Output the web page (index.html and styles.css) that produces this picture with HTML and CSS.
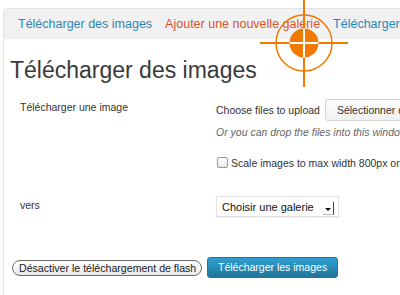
FILE: index.html
```html
<!DOCTYPE html>
<html lang="fr">
<head>
  <meta charset="UTF-8" />
  <title>Télécharger des images</title>
  <link rel="stylesheet" href="styles.css">
</head>
<body>
  <div class="wrap">
    <!-- Tabs -->
    <div class="tabs">
      <a class="tab">Télécharger des images</a>
      <a class="tab current">Ajouter une nouvelle galerie</a>
      <a class="tab">Télécharger un dossier</a>
    </div>

    <h2>Télécharger des images</h2>

    <div class="form-row first">
      <div class="label">Télécharger une image</div>
      <div class="field">
        <div class="line">
          <span>Choose files to upload</span>
          <span class="btn-select">Sélectionner des fichiers</span>
        </div>
        <p class="hint">Or you can drop the files into this window.</p>
        <label class="check">
          <input type="checkbox">
          <span>Scale images to max width 800px or max height 600px</span>
        </label>
      </div>
    </div>

    <div class="form-row">
      <div class="label label-vers">vers</div>
      <div class="field">
        <div class="select">
          <span>Choisir une galerie</span>
          <span class="arrow"></span>
        </div>
      </div>
    </div>

    <div class="actions">
      <span class="btn-flash">Désactiver le téléchargement de flash</span>
      <span class="btn-primary">Télécharger les images</span>
    </div>
  </div>

  <!-- cursor target -->
  <svg class="target" width="90" height="90" viewBox="0 0 90 90">
    <line x1="0" y1="43" x2="88" y2="43" stroke="#f27a00" stroke-width="2"/>
    <line x1="44" y1="0" x2="44" y2="87" stroke="#f27a00" stroke-width="2"/>
    <circle cx="44" cy="43" r="28" fill="none" stroke="#f27a00" stroke-width="1.5"/>
    <circle cx="44" cy="43" r="14.5" fill="#f27a00"/>
    <line x1="29.5" y1="43" x2="58.5" y2="43" stroke="#fff" stroke-width="2"/>
    <line x1="44" y1="28.5" x2="44" y2="57.5" stroke="#fff" stroke-width="2"/>
  </svg>
</body>
</html>
```

FILE: styles.css
```css
body {
  margin: 0;
  font-family: "Liberation Sans", Arial, sans-serif;
  background-color: #fff;
  color: #333;
  overflow: hidden;
  height: 295px;
  position: relative;
}

.wrap {
  margin: 8px 0 0 3px;
  border-left: 1px solid #e3e3e3;
  border-top: 1px solid #e3e3e3;
  border-top-left-radius: 5px;
  height: 300px;
  overflow: hidden;
}

/* Tabs */
.tabs {
  background-color: #f1f1f1;
  height: 30px;
  display: flex;
  align-items: center;
  gap: 13px;
  padding-left: 14px;
  font-size: 12.5px;
  white-space: nowrap;
  border-top-left-radius: 4px;
}

.tab {
  color: #2a86b8;
}

.tab.current {
  color: #d9532c;
}

h2 {
  font-size: 23px;
  font-weight: normal;
  line-height: 26px;
  color: #3a3a3a;
  margin: 18px 0 0 6px;
}

/* Form rows */
.form-row {
  display: flex;
  font-size: 10.5px;
  line-height: 12px;
  white-space: nowrap;
}

.form-row.first {
  margin-top: 16px;
}

.form-row + .form-row {
  margin-top: 27px;
}

.label {
  width: 196px;
  padding: 2px 0 0 16px;
  box-sizing: border-box;
  flex-shrink: 0;
}

.label-vers {
  padding-top: 3px;
}

.field {
  padding-left: 16px;
}

.line {
  display: flex;
  align-items: center;
  gap: 5px;
  height: 22px;
}

.btn-select {
  height: 20px;
  line-height: 20px;
  padding: 0 11px;
  border: 1px solid #d4d4d4;
  border-radius: 3px;
  background: linear-gradient(#fcfcfc, #f1f1f1);
  color: #333;
}

.hint {
  margin: 5px 0 0;
  font-style: italic;
  color: #666;
}

.check {
  display: flex;
  align-items: center;
  gap: 3px;
  margin-top: 18px;
  height: 13px;
}

.check input {
  appearance: none;
  margin: 0 0 0 1px;
  width: 11px;
  height: 11px;
  border: 1px solid #999;
  border-radius: 2px;
  background: linear-gradient(#fff, #e8e8e8);
  box-sizing: border-box;
}

.select {
  width: 123px;
  height: 21px;
  box-sizing: border-box;
  border: 1px solid #e2e2e2;
  box-shadow: 0 1px 1px rgba(0, 0, 0, 0.06);
  background-color: #fff;
  display: flex;
  align-items: center;
  justify-content: space-between;
  padding: 0 4px 0 5px;
  font-size: 11px;
  color: #111;
}

.arrow {
  width: 10px;
  height: 12px;
  margin-top: 3px;
  border-right: 1px solid #444;
  border-bottom: 1px solid #bbb;
  position: relative;
}

.arrow::after {
  content: "";
  position: absolute;
  left: 2px;
  top: 6px;
  border-left: 3px solid transparent;
  border-right: 3px solid transparent;
  border-top: 3px solid #111;
}

/* Buttons */
.actions {
  display: flex;
  align-items: center;
  gap: 5px;
  margin: 40px 0 0 8px;
  font-size: 10.5px;
  white-space: nowrap;
}

.btn-flash {
  width: 190px;
  height: 16px;
  line-height: 14px;
  box-sizing: border-box;
  padding: 0 0 0 6px;
  border: 1px solid #6c6c6c;
  border-radius: 8px;
  background: linear-gradient(#fff, #e9e9e9);
  color: #222;
  font-size: 10.6px;
  overflow: hidden;
}

.btn-primary {
  height: 21px;
  line-height: 19px;
  box-sizing: border-box;
  padding: 0 10px;
  border: 1px solid #21759b;
  border-radius: 3px;
  background: linear-gradient(#2e9fd2, #21759b);
  color: #fff;
}

.target {
  position: absolute;
  left: 260px;
  top: 0;
}
```
